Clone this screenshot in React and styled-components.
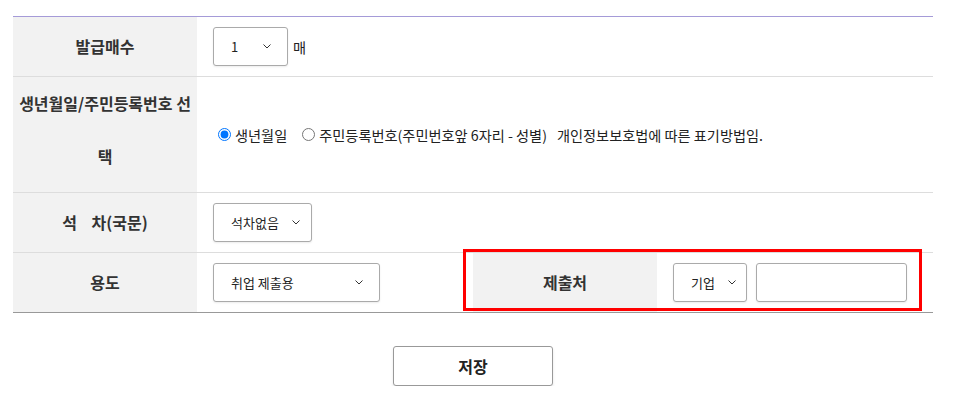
import styled, { createGlobalStyle } from 'styled-components';

//===
// Global
//===

const GlobalStyle = createGlobalStyle`
    body{
        margin: 0;
        background: #fff;
        font-family: "Noto Sans CJK KR", "Noto Sans", sans-serif;
        color: #222;
    }
`

//===
// Styled
//===

const Wrapper = styled.div`
    position: relative;
    width: 920px;
    margin: 16px 0 0 13px;
`

const Table = styled.table`
    width: 920px;
    border-collapse: collapse;
    table-layout: fixed;
    border-top: 1px solid #a59bd8;
    border-bottom: 1px solid #999;
`

const Row = styled.tr`
    border-bottom: 1px solid #ddd;
    &:last-child{
        border-bottom: none;
    }
`

const Head = styled.th`
    width: 184px;
    background: #f2f2f2;
    color: #333;
    font-size: 16px;
    font-weight: 700;
    line-height: ${props => props.$tall ? '53px' : '59px'};
    padding: ${props => props.$tall ? '0 2px 9px' : '0 2px'};
    text-align: center;
    vertical-align: middle;
`

const Cell = styled.td`
    padding: 10px 16px;
    font-size: 14.2px;
    vertical-align: middle;
`

const Inline = styled.div`
    display: flex;
    align-items: center;
    gap: ${props => props.$gap || 0}px;
    white-space: nowrap;
`

const Select = styled.div`
    box-sizing: border-box;
    width: ${props => props.$w}px;
    height: 39px;
    display: flex;
    align-items: center;
    justify-content: ${props => props.$tight ? 'flex-start' : 'space-between'};
    gap: 13px;
    padding: 0 16px 0 17px;
    border: 1px solid #aaa;
    border-radius: 3px;
    background: #fff;
    box-shadow: 0 1px 2px rgba(0,0,0,0.08);
    font-size: 13px;
    color: #222;
    white-space: nowrap;
    svg{
        flex-shrink: 0;
    }
`

const TextBox = styled.div`
    box-sizing: border-box;
    width: 151px;
    height: 39px;
    border: 1px solid #aaa;
    border-radius: 3px;
    box-shadow: 0 1px 2px rgba(0,0,0,0.08);
`

const Radio = styled.label`
    display: inline-flex;
    align-items: center;
    margin-right: ${props => props.$mr || 0}px;
    input{
        margin: 0 4px 0 5px;
        width: 13px;
        height: 13px;
    }
`

const Note = styled.span`
    margin-left: 10px;
`

const Annotation = styled.div`
    position: absolute;
    left: 450px;
    top: 233px;
    width: 459px;
    height: 62px;
    box-sizing: border-box;
    border: 3px solid #f00;
    pointer-events: none;
`

const Actions = styled.div`
    display: flex;
    justify-content: center;
    padding-top: 33px;
`

const SaveButton = styled.button`
    width: 160px;
    height: 40px;
    border: 1px solid #999;
    border-radius: 3px;
    background: #fff;
    box-shadow: 0 2px 3px rgba(0,0,0,0.1);
    font-family: inherit;
    font-size: 16px;
    font-weight: 700;
    color: #222;
`

//===
// Component
//===

const Chevron = () => (
    <svg width="8" height="5" viewBox="0 0 8 5" fill="none">
        <path d="M0.5 0.5L4 4L7.5 0.5" stroke="#333" strokeWidth="1" />
    </svg>
)

const App = () => {
    return(
        <>
        <GlobalStyle />
        <Wrapper>
            <Table>
                <colgroup>
                    <col style={{width: 184}} />
                    <col style={{width: 276}} />
                    <col style={{width: 184}} />
                    <col style={{width: 276}} />
                </colgroup>
                <tbody>
                    <Row>
                        <Head>발급매수</Head>
                        <Cell colSpan={3}>
                            <Inline $gap={5}>
                                <Select $w={75}>1<Chevron /></Select>
                                <span>매</span>
                            </Inline>
                        </Cell>
                    </Row>
                    <Row>
                        <Head $tall>생년월일/주민등록번호 선택</Head>
                        <Cell colSpan={3}>
                            <Inline>
                                <Radio $mr={10}><input type="radio" name="id" defaultChecked />생년월일</Radio>
                                <Radio><input type="radio" name="id" />주민등록번호(주민번호앞 6자리 - 성별)</Radio>
                                <Note>개인정보보호법에 따른 표기방법임.</Note>
                            </Inline>
                        </Cell>
                    </Row>
                    <Row>
                        <Head>석&nbsp;&nbsp;&nbsp;&nbsp;차(국문)</Head>
                        <Cell colSpan={3}>
                            <Select $w={99} $tight>석차없음<Chevron /></Select>
                        </Cell>
                    </Row>
                    <Row>
                        <Head>용도</Head>
                        <Cell>
                            <Select $w={167}>취업 제출용<Chevron /></Select>
                        </Cell>
                        <Head>제출처</Head>
                        <Cell>
                            <Inline $gap={9}>
                                <Select $w={74} $tight>기업<Chevron /></Select>
                                <TextBox />
                            </Inline>
                        </Cell>
                    </Row>
                </tbody>
            </Table>
            <Annotation />
            <Actions>
                <SaveButton>저장</SaveButton>
            </Actions>
        </Wrapper>
        </>
    )
}

export default App
